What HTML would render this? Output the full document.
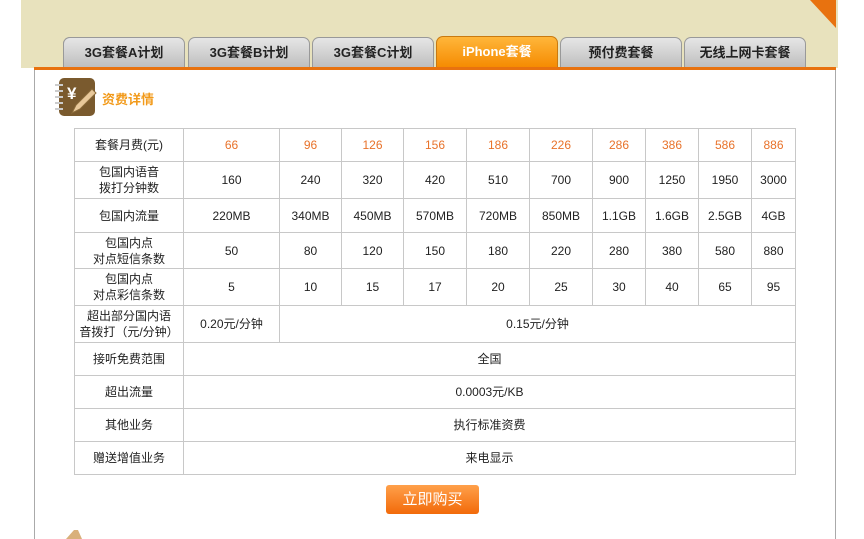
<!DOCTYPE html>
<html><head><meta charset="utf-8"><style>
body{margin:0;width:864px;height:539px;overflow:hidden;background:#fff;font-family:"Liberation Sans","Noto Sans CJK SC",sans-serif;position:relative}
.top{position:absolute;left:21px;top:0;width:817px;height:68px;background:#e8e2bd}
.tri{position:absolute;left:810px;top:0;width:0;height:0;border-top:28px solid #e8720f;border-left:26px solid transparent}
.oline{position:absolute;left:34px;top:67px;width:802px;height:3px;background:#e8720f}
.lb{position:absolute;left:34px;top:70px;width:1px;height:469px;background:#aaa}
.rb{position:absolute;left:835px;top:70px;width:1px;height:469px;background:#aaa}
.tab{position:absolute;top:37px;height:31px;border-radius:7px 7px 0 0;background:linear-gradient(#e6e6e6,#bdbdbd);border:1px solid #999;border-bottom:none;box-sizing:border-box;font-size:13px;font-weight:bold;color:#222;text-align:center;line-height:29px}
.tab.on{background:linear-gradient(#ffb63a,#f58a00);color:#fff;border-color:#c97a10;top:36px;height:32px}
table{position:absolute;left:74px;top:128px;border-collapse:collapse;font-size:12px;color:#222}
td{border:1px solid #c8c8c8;text-align:center;padding:0;line-height:16px}
.o td{color:#e8722a}
.o td:first-child{color:#222}
.btn{position:absolute;left:386px;top:485px;width:93px;height:29px;border-radius:3px;background:linear-gradient(#ffa04a,#f26a0a);color:#fff;font-size:15px;text-align:center;line-height:29px}
</style></head><body>
<div class="top"></div><div class="tri"></div>
<div class="tab" style="left:63px;width:100px">3G套餐A计划</div>
<div class="tab" style="left:187px;width:123px;left:188px;width:122px">3G套餐B计划</div>
<div class="tab" style="left:312px;width:122px">3G套餐C计划</div>
<div class="tab on" style="left:436px;width:122px">iPhone套餐</div>
<div class="tab" style="left:560px;width:122px">预付费套餐</div>
<div class="tab" style="left:684px;width:122px">无线上网卡套餐</div>
<div class="tab" style="left:63px;width:122px">3G套餐A计划</div>
<div class="oline"></div><div class="lb"></div><div class="rb"></div>
<svg style="position:absolute;left:54px;top:77px" width="44" height="42"><rect x="5" y="1" width="36" height="38" rx="5" fill="#7a5a2e"/><g stroke="#ccc" stroke-width="2"><line x1="1" y1="8" x2="9" y2="8"/><line x1="1" y1="14" x2="9" y2="14"/><line x1="1" y1="20" x2="9" y2="20"/><line x1="1" y1="26" x2="9" y2="26"/><line x1="1" y1="32" x2="9" y2="32"/></g><text x="13" y="22" fill="#fff" font-size="17" font-weight="bold" font-family="Liberation Sans">¥</text><path d="M18 36 L22 28 L38 12 L42 16 L26 32 Z" fill="#e8c89a" stroke="#8a6a3a"/></svg>
<div style="position:absolute;left:102px;top:89px;color:#f29a1a;font-size:13px;font-weight:bold">资费详情</div>
<table>
<colgroup><col style="width:109px"><col style="width:96px"><col style="width:62px"><col style="width:62px"><col style="width:63px"><col style="width:63px"><col style="width:63px"><col style="width:53px"><col style="width:53px"><col style="width:53px"><col style="width:44px"></colgroup>
<tr class="o" style="height:33px"><td>套餐月费(元)</td><td>66</td><td>96</td><td>126</td><td>156</td><td>186</td><td>226</td><td>286</td><td>386</td><td>586</td><td>886</td></tr>
<tr style="height:37px"><td>包国内语音<br>拨打分钟数</td><td>160</td><td>240</td><td>320</td><td>420</td><td>510</td><td>700</td><td>900</td><td>1250</td><td>1950</td><td>3000</td></tr>
<tr style="height:34px"><td>包国内流量</td><td>220MB</td><td>340MB</td><td>450MB</td><td>570MB</td><td>720MB</td><td>850MB</td><td>1.1GB</td><td>1.6GB</td><td>2.5GB</td><td>4GB</td></tr>
<tr style="height:36px"><td>包国内点<br>对点短信条数</td><td>50</td><td>80</td><td>120</td><td>150</td><td>180</td><td>220</td><td>280</td><td>380</td><td>580</td><td>880</td></tr>
<tr style="height:37px"><td>包国内点<br>对点彩信条数</td><td>5</td><td>10</td><td>15</td><td>17</td><td>20</td><td>25</td><td>30</td><td>40</td><td>65</td><td>95</td></tr>
<tr style="height:37px"><td>超出部分国内语<br>音拨打（元/分钟）</td><td>0.20元/分钟</td><td colspan="9">0.15元/分钟</td></tr>
<tr style="height:33px"><td>接听免费范围</td><td colspan="10">全国</td></tr>
<tr style="height:33px"><td>超出流量</td><td colspan="10">0.0003元/KB</td></tr>
<tr style="height:33px"><td>其他业务</td><td colspan="10">执行标准资费</td></tr>
<tr style="height:33px"><td>赠送增值业务</td><td colspan="10">来电显示</td></tr>
</table>
<div class="btn">立即购买</div>
<svg style="position:absolute;left:64px;top:528px" width="24" height="11"><path d="M2 11 L10 2 L14 2 L18 11" fill="#d9b07a"/></svg>
</body></html>
